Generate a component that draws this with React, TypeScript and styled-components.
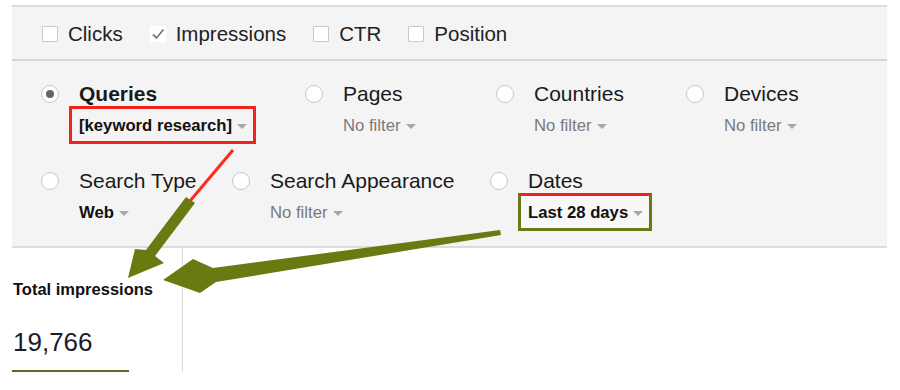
import styled, { createGlobalStyle } from 'styled-components';

const GlobalStyle = createGlobalStyle`
  body {
    margin: 0;
    background: #ffffff;
    font-family: "Liberation Sans", Arial, sans-serif;
    color: #222222;
  }
`;

interface FilterItem {
  label: string;
  value: string;
  width: number;
  selected?: boolean;
  strong?: boolean;
  box?: 'red' | 'green';
}

const metrics = [
  { label: 'Clicks', checked: false },
  { label: 'Impressions', checked: true },
  { label: 'CTR', checked: false },
  { label: 'Position', checked: false },
];

const firstRow: FilterItem[] = [
  { label: 'Queries', value: '[keyword research]', width: 264, selected: true, strong: true, box: 'red' },
  { label: 'Pages', value: 'No filter', width: 191 },
  { label: 'Countries', value: 'No filter', width: 190 },
  { label: 'Devices', value: 'No filter', width: 190 },
];

const secondRow: FilterItem[] = [
  { label: 'Search Type', value: 'Web', width: 191, strong: true },
  { label: 'Search Appearance', value: 'No filter', width: 258 },
  { label: 'Dates', value: 'Last 28 days', width: 190, strong: true, box: 'green' },
];

const Filter = ({ item }: { item: FilterItem }) => (
  <FilterCell $width={item.width}>
    <Radio $selected={item.selected} />
    <FilterText>
      <FilterLabel $selected={item.selected}>{item.label}</FilterLabel>
      <Dropdown $box={item.box} $strong={item.strong}>
        {item.value}
        <Caret />
      </Dropdown>
    </FilterText>
  </FilterCell>
);

const App = () => {
  return (
    <Page>
      <GlobalStyle />
      <Panel>
        <MetricBar>
          {metrics.map((m) => (
            <Metric key={m.label}>
              {m.checked ? (
                <CheckMark viewBox="0 0 16 16">
                  <path d="M3 8.5 L6.5 12 L13.5 3.5" fill="none" stroke="#7a7a7a" strokeWidth="1.8" />
                </CheckMark>
              ) : (
                <CheckBox />
              )}
              {m.label}
            </Metric>
          ))}
        </MetricBar>
        <Filters>
          <FilterRow>
            {firstRow.map((f) => (
              <Filter key={f.label} item={f} />
            ))}
          </FilterRow>
          <FilterRow>
            {secondRow.map((f) => (
              <Filter key={f.label} item={f} />
            ))}
          </FilterRow>
        </Filters>
      </Panel>
      <Stats>
        <StatCard>
          <StatTitle>Total impressions</StatTitle>
          <StatValue>19,766</StatValue>
          <StatLine />
        </StatCard>
      </Stats>
      <Annotations viewBox="0 0 900 390">
        <line x1="233" y1="150" x2="190" y2="201" stroke="#ff2a1a" strokeWidth="3" />
        <polygon
          points="186,197 195,203 155,256 164,263 128,278 135,249 146,250"
          fill="#687a10"
        />
        <polygon
          points="500,230 501,235 216,282 200,293 163,280 193,259 213,268"
          fill="#687a10"
        />
      </Annotations>
    </Page>
  );
};

export default App;

const Page = styled.div`
  position: relative;
  width: 900px;
  height: 390px;
  overflow: hidden;
  padding-top: 5px;
  box-sizing: border-box;
`;

const Panel = styled.div`
  margin-left: 12px;
  width: 875px;
  background: #f4f4f4;
  border-top: 2px solid #dcdcdc;
  border-bottom: 2px solid #dcdcdc;
`;

const MetricBar = styled.div`
  display: flex;
  align-items: center;
  gap: 27px;
  height: 54px;
  padding-left: 30px;
  padding-top: 2px;
  border-bottom: 2px solid #d6d6d6;
  box-sizing: border-box;
`;

const Metric = styled.div`
  display: flex;
  align-items: center;
  gap: 10px;
  font-size: 20.5px;
  color: #222;
`;

const CheckBox = styled.span`
  width: 14px;
  height: 14px;
  border: 1px solid #c9c9c9;
  background: #ffffff;
  border-radius: 1px;
`;

const CheckMark = styled.svg`
  width: 16px;
  height: 16px;
  background: #ffffff;
`;

const Filters = styled.div`
  display: flex;
  flex-direction: column;
  gap: 25px;
  padding: 21px 0 15px 29px;
`;

const FilterRow = styled.div`
  display: flex;
`;

const FilterCell = styled.div<{ $width: number }>`
  display: flex;
  gap: 20px;
  width: ${(p) => p.$width}px;
  flex-shrink: 0;
`;

const Radio = styled.span<{ $selected?: boolean }>`
  position: relative;
  width: 18px;
  height: 18px;
  margin-top: 3px;
  border: 1px solid #c8c8c8;
  border-radius: 50%;
  background: #ffffff;
  box-sizing: border-box;
  flex-shrink: 0;

  &::after {
    content: '';
    display: ${(p) => (p.$selected ? 'block' : 'none')};
    position: absolute;
    left: 4px;
    top: 4px;
    width: 8px;
    height: 8px;
    border-radius: 50%;
    background: #666666;
  }
`;

const FilterText = styled.div`
  display: flex;
  flex-direction: column;
  align-items: flex-start;
`;

const FilterLabel = styled.div<{ $selected?: boolean }>`
  font-size: 21px;
  line-height: 24px;
  font-weight: ${(p) => (p.$selected ? 700 : 400)};
  color: #1a1a1a;
`;

const Dropdown = styled.div<{ $box?: 'red' | 'green'; $strong?: boolean }>`
  display: flex;
  align-items: center;
  gap: 5px;
  margin-left: -10px;
  padding: 1px 6px 0 7px;
  height: 38px;
  box-sizing: border-box;
  border: 3px solid
    ${(p) => (p.$box === 'red' ? '#f2231b' : p.$box === 'green' ? '#6a7a14' : 'transparent')};
  border-top-color: ${(p) => (p.$box ? '#f2231b' : 'transparent')};
  font-size: 16.7px;
  font-weight: ${(p) => (p.$strong ? 700 : 400)};
  color: ${(p) => (p.$strong ? '#111111' : '#7a7a7a')};
  background: ${(p) => (p.$box === 'green' ? '#f8f8f8' : 'transparent')};
  white-space: nowrap;
`;

const Caret = styled.span`
  width: 0;
  height: 0;
  margin-top: 2px;
  border-left: 5px solid transparent;
  border-right: 5px solid transparent;
  border-top: 5px solid #a8a8a8;
`;

const Stats = styled.div`
  display: flex;
  margin-left: 12px;
`;

const StatCard = styled.div`
  width: 171px;
  height: 124px;
  border-right: 1px solid #d8d8d8;
  padding-top: 32px;
  box-sizing: border-box;
  display: flex;
  flex-direction: column;
`;

const StatTitle = styled.div`
  margin-left: 1px;
  font-size: 16.5px;
  line-height: 19px;
  font-weight: 700;
  color: #111111;
`;

const StatValue = styled.div`
  margin-top: 27px;
  margin-left: 1px;
  font-size: 26px;
  line-height: 32px;
  color: #1a1a2a;
`;

const StatLine = styled.div`
  margin-top: auto;
  width: 117px;
  height: 2px;
  background: #5e6d22;
`;

const Annotations = styled.svg`
  position: absolute;
  left: 0;
  top: 0;
  width: 900px;
  height: 390px;
  pointer-events: none;
`;
